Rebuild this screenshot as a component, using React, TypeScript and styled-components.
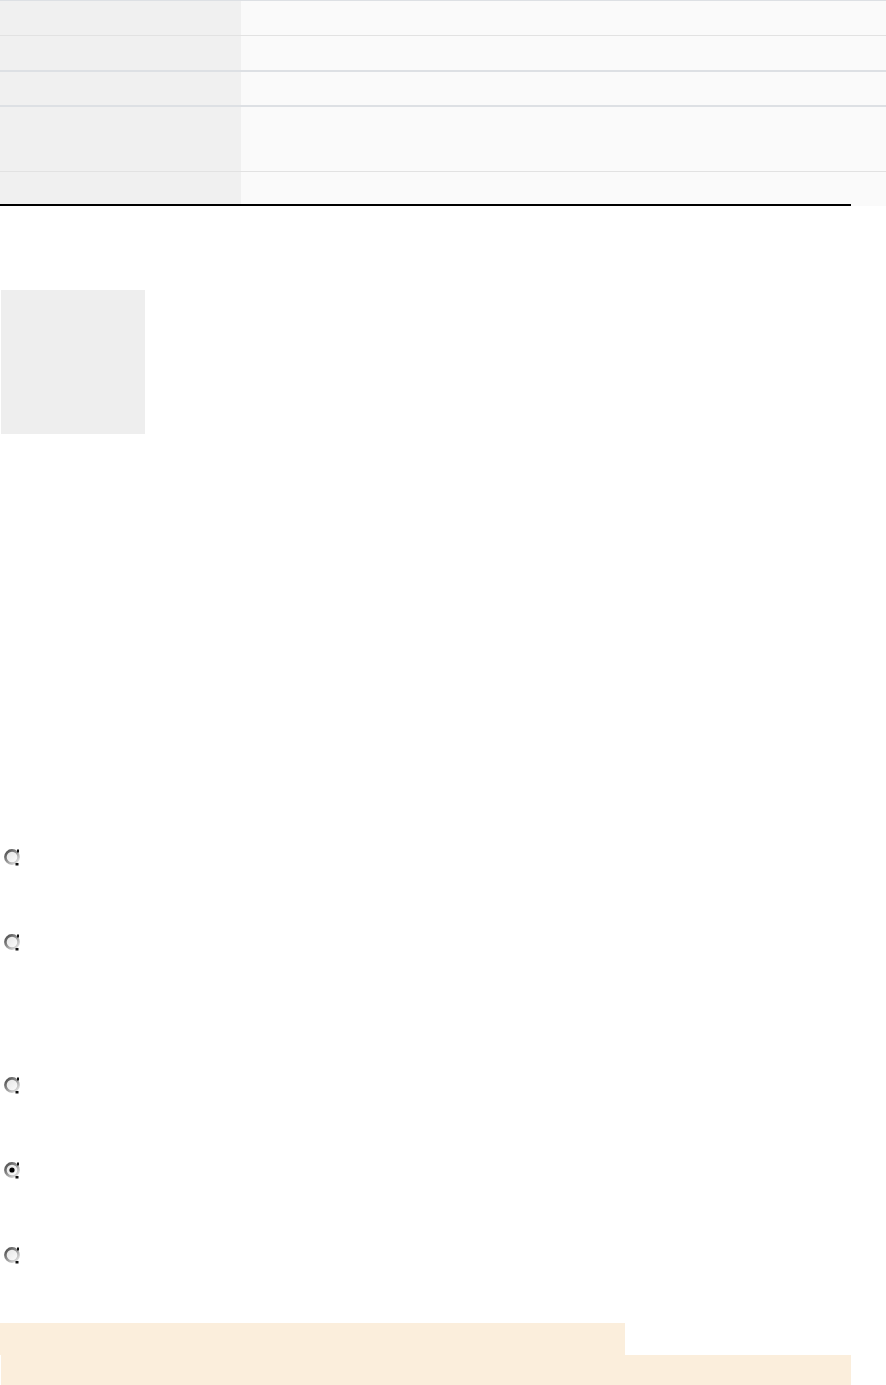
import React from "react";
import styled, { createGlobalStyle } from "styled-components";

const GlobalStyle = createGlobalStyle`
  html, body {
    margin: 0;
    padding: 0;
    background: #ffffff;
    font-family: "Liberation Sans", Arial, sans-serif;
  }
`;

const Page = styled.div`
  width: 886px;
  display: flex;
  flex-direction: column;
`;

const Table = styled.div`
  width: 886px;
  display: flex;
  flex-direction: column;
  border-top: 1px solid #dde0e4;
`;

const Row = styled.div<{ $h: number; $line: number; $lineColor: string }>`
  display: grid;
  grid-template-columns: 241px 1fr;
  height: ${(p) => p.$h}px;
  border-bottom: ${(p) => p.$line}px solid ${(p) => p.$lineColor};
`;

const Label = styled.div`
  background: #f0f0f0;
`;

const Value = styled.div`
  background: #fafafa;
`;

const Rule = styled.div`
  width: 851px;
  height: 2px;
  margin-top: -2px;
  background: #000000;
  position: relative;
`;

const Thumb = styled.div`
  width: 144px;
  height: 144px;
  margin: 84px 0 0 1px;
  background: #eeeeee;
`;

const Options = styled.div<{ $top: number }>`
  display: flex;
  flex-direction: column;
  gap: 67px;
  margin-top: ${(p) => p.$top}px;
`;

const OptionRow = styled.label`
  display: flex;
  align-items: center;
  height: 18px;
  padding-left: 3px;
`;

const Highlight = styled.div`
  margin-top: 59px;
  display: flex;
  flex-direction: column;
`;

const Band = styled.div<{ $w: number; $x: number; $h: number }>`
  width: ${(p) => p.$w}px;
  height: ${(p) => p.$h}px;
  margin-left: ${(p) => p.$x}px;
  background: #fbeedc;
`;

const Radio: React.FC<{ checked?: boolean }> = ({ checked }) => (
  <svg width="18" height="18" viewBox="0 0 18 18">
    <defs>
      <linearGradient id="rimg" x1="0" y1="0" x2="1" y2="1">
        <stop offset="0" stopColor="#444" />
        <stop offset="0.5" stopColor="#999" />
        <stop offset="1" stopColor="#eee" />
      </linearGradient>
      <linearGradient id="fillg" x1="0" y1="0" x2="1" y2="1">
        <stop offset="0" stopColor="#e2e2e2" />
        <stop offset="1" stopColor="#ffffff" />
      </linearGradient>
    </defs>
    <circle cx="9" cy="9" r="6.6" fill="url(#fillg)" stroke="url(#rimg)" strokeWidth="2.6" />
    <rect x="14" y="1.5" width="2" height="3" fill="#111" />
    <rect x="12.5" y="15" width="3" height="2.5" fill="#111" />
    {checked && <circle cx="9" cy="9" r="2.6" fill="#000" />}
  </svg>
);

const rows = [
  { h: 34, line: 1, color: "#e2e2e2" },
  { h: 34, line: 2, color: "#dde0e4" },
  { h: 33, line: 2, color: "#dde0e4" },
  { h: 64, line: 1, color: "#e2e2e2" },
  { h: 34, line: 0, color: "transparent" },
];

export default function App() {
  return (
    <Page>
      <GlobalStyle />
      <Table>
        {rows.map((r, i) => (
          <Row key={i} $h={r.h} $line={r.line} $lineColor={r.color}>
            <Label />
            <Value />
          </Row>
        ))}
      </Table>
      <Rule />
      <Thumb />
      <Options $top={414}>
        <OptionRow>
          <Radio />
        </OptionRow>
        <OptionRow>
          <Radio />
        </OptionRow>
      </Options>
      <Options $top={125}>
        <OptionRow>
          <Radio />
        </OptionRow>
        <OptionRow>
          <Radio checked />
        </OptionRow>
        <OptionRow>
          <Radio />
        </OptionRow>
      </Options>
      <Highlight>
        <Band $w={625} $x={0} $h={32} />
        <Band $w={850} $x={1} $h={30} />
      </Highlight>
    </Page>
  );
}
